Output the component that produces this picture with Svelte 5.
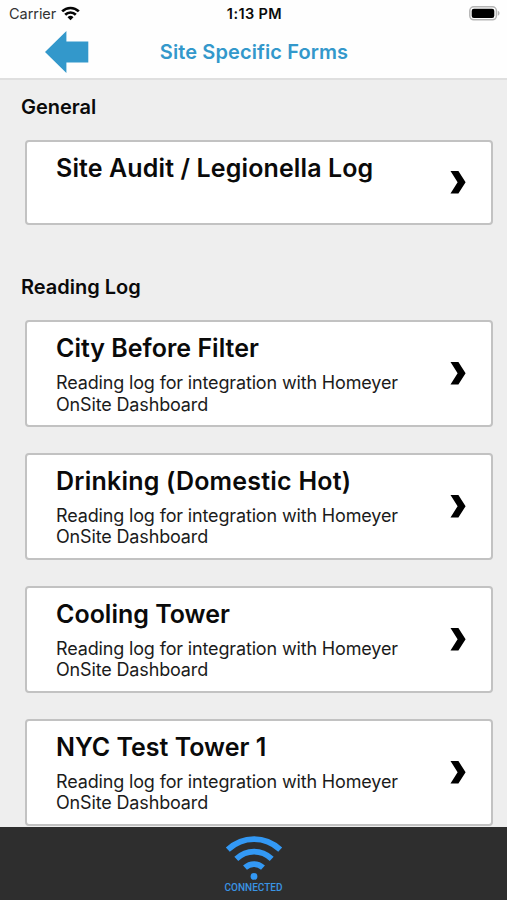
<script lang="ts">
	interface Form {
		title: string;
		description?: string;
		spacing?: number;
	}

	interface Section {
		name: string;
		forms: Form[];
	}

	const readingLog = 'Reading log for integration with Homeyer OnSite Dashboard';

	const sections: Section[] = [
		{ name: 'General', forms: [{ title: 'Site Audit / Legionella Log', spacing: 0.12 }] },
		{
			name: 'Reading Log',
			forms: [
				{ title: 'City Before Filter', description: readingLog },
				{ title: 'Drinking (Domestic Hot)', description: readingLog, spacing: 0.22 },
				{ title: 'Cooling Tower', description: readingLog },
				{ title: 'NYC Test Tower 1', description: readingLog },
			],
		},
	];
</script>

<div class="screen">
	<header class="header">
		<div class="status-bar">
			<div class="carrier">
				<span>Carrier</span>
				<svg width="19" height="15" viewBox="0 0 19 15" aria-hidden="true">
					<g fill="none" stroke="#050505" stroke-width="2.7">
						<path d="M1.2 5.4a11.8 11.8 0 0 1 16.6 0" />
						<path d="M4.2 8.7a7.5 7.5 0 0 1 10.6 0" />
					</g>
					<path d="M6.5 11.2a4.3 4.3 0 0 1 6 0l-3 3z" fill="#050505" />
				</svg>
			</div>
			<span class="time">1:13 PM</span>
			<svg class="battery" width="31" height="15" viewBox="0 0 31 15" aria-hidden="true">
				<rect x=".8" y=".8" width="26.6" height="13" rx="4" fill="#fff" stroke="#b5b5b5" stroke-width="1.5" />
				<rect x="2.7" y="2.7" width="22.6" height="9.2" rx="2.2" fill="#000" />
				<path d="M28.8 4.8c2.3.9 2.3 4.1 0 5z" fill="#b5b5b5" />
			</svg>
		</div>
		<div class="nav-bar">
			<button type="button" class="back" aria-label="Back">
				<svg width="44" height="42" viewBox="0 0 44 42">
					<path d="M0 21 21.4 0v10.4H43.3v21.2H21.4V42z" fill="#3398cb" />
				</svg>
			</button>
			<h1>Site Specific Forms</h1>
		</div>
	</header>

	<main class="content">
		{#each sections as section}
			<section>
				<h2>{section.name}</h2>
				<div class="forms">
					{#each section.forms as form}
						<button type="button" class="card" class:short={!form.description}>
							<span class="card-text">
								<span class="card-title" style="letter-spacing: {form.spacing ?? 0}px">{form.title}</span>
								{#if form.description}
									<span class="card-description">{form.description}</span>
								{/if}
							</span>
							<svg class="chevron" width="16" height="23" viewBox="0 0 16 23" aria-hidden="true">
								<path d="M.5 0H8.4L15.6 11.2 8.4 22.4H.5L7.6 11.2z" />
							</svg>
						</button>
					{/each}
				</div>
			</section>
		{/each}
	</main>

	<footer class="footer">
		<svg width="58" height="45" viewBox="0 0 58 45" aria-hidden="true">
			<g fill="none" stroke="#3399f5" stroke-width="5.8">
				<path d="M2.8 13.6C18 -.4 40 -.4 55.2 13.6" />
				<path d="M11.3 22.8C21.8 13.2 36.2 13.2 46.7 22.8" />
				<path d="M20 31.7C25.3 26.9 32.7 26.9 38 31.7" />
			</g>
			<circle cx="29" cy="40.4" r="3.4" fill="#3399f5" />
		</svg>
		<span>CONNECTED</span>
	</footer>
</div>

<style>
	:global(body) {
		background: #eee;
	}

	.screen {
		display: flex;
		flex-direction: column;
		height: 900px;
		overflow: hidden;
		background: #eee;
		color: #0a0a0a;
		font-family: Inter, 'Liberation Sans', sans-serif;
	}

	button {
		font: inherit;
		color: inherit;
		text-align: left;
		cursor: pointer;
	}

	.header {
		flex: none;
		box-sizing: border-box;
		height: 80px;
		background: #fefefe;
		border-bottom: 2px solid #dfdfdf;
	}

	.status-bar {
		display: grid;
		grid-template-columns: 1fr auto 1fr;
		align-items: center;
		height: 27px;
		padding: 0 7px 0 9px;
		font-size: 14.5px;
	}

	.carrier {
		display: flex;
		align-items: center;
		gap: 5px;
		color: #333;
		letter-spacing: -0.05px;
	}

	.time {
		font-weight: 600;
		letter-spacing: 0.4px;
	}

	.battery {
		justify-self: end;
	}

	.nav-bar {
		display: grid;
		grid-template-columns: 120px 1fr 119px;
		align-items: center;
		height: 50px;
	}

	.back {
		display: block;
		padding: 0 0 0 45px;
		border: 0;
		background: none;
	}

	.back svg {
		display: block;
	}

	h1 {
		margin: 0;
		font-size: 20px;
		font-weight: 600;
		letter-spacing: 0.1px;
		color: #3398cb;
		text-align: center;
		white-space: nowrap;
	}

	.content {
		flex: 1;
		min-height: 0;
		overflow: hidden;
	}

	section {
		height: 180.2px;
	}

	h2 {
		margin: 0;
		padding: 14px 21px 0;
		height: 46px;
		font-size: 20px;
		font-weight: 600;
		line-height: 26px;
	}

	.forms {
		display: flex;
		flex-direction: column;
		gap: 25.8px;
		padding: 0 14px 0 25px;
	}

	.card {
		display: flex;
		align-items: center;
		box-sizing: border-box;
		width: 100%;
		height: 107px;
		padding: 0 25.5px 0 29px;
		border: 2px solid #c2c2c2;
		border-radius: 4px;
		background: #fff;
	}

	.short {
		height: 85px;
	}

	.card-text {
		flex: 1;
		align-self: flex-start;
		padding-top: 10px;
	}

	.card-title,
	.card-description {
		display: block;
	}

	.card-title {
		font-size: 25px;
		font-weight: 600;
		line-height: 32px;
	}

	.card-description {
		width: 360px;
		margin-top: 8px;
		font-size: 18px;
		line-height: 21.5px;
		letter-spacing: -0.15px;
		color: #1b1b1b;
	}

	.chevron {
		flex: none;
	}

	.footer {
		flex: none;
		display: flex;
		flex-direction: column;
		align-items: center;
		box-sizing: border-box;
		height: 73.5px;
		padding-top: 9px;
		background: #2e2e2e;
		color: #3a94e4;
		font-family: Roboto, 'Liberation Sans', sans-serif;
		font-size: 10px;
		font-weight: 500;
		line-height: 14px;
	}
</style>
